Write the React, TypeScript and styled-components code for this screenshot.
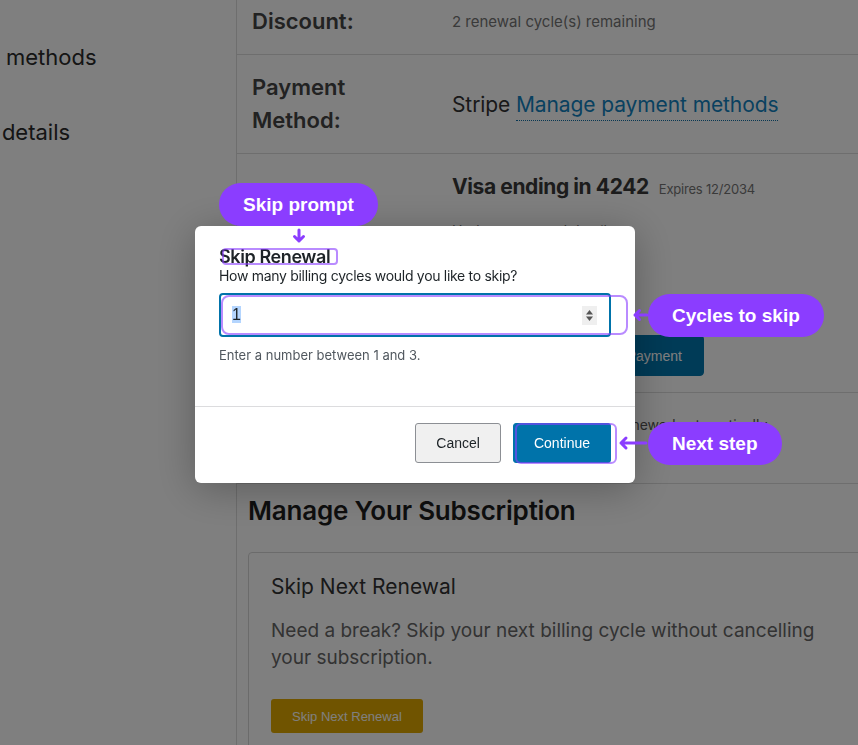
import React from "react";
import styled, { createGlobalStyle } from "styled-components";

const GlobalStyle = createGlobalStyle`
  * { box-sizing: border-box; }
  html, body { margin: 0; padding: 0; }
  body {
    width: 858px;
    height: 745px;
    overflow: hidden;
    background: #fff;
    font-family: Inter, "Noto Sans", Arial, sans-serif;
  }
`;

const Viewport = styled.div`
  position: relative;
  width: 858px;
  height: 745px;
  overflow: hidden;
`;

/* the page is scrolled: negative margins stand for the scroll offset */
const Page = styled.div`
  display: grid;
  grid-template-columns: 337px 880px;
  margin: -60px 0 0 -100px;
`;

const Sidebar = styled.nav`
  border-right: 1px solid #dcdcdc;
  padding: 5px 0 0 9px;
  min-height: 900px;
`;

const NavItem = styled.div`
  font-size: 22px;
  line-height: 33px;
  padding: 21px 0;
  color: #2a2a2a;
  white-space: nowrap;
`;

const Main = styled.main`
  padding-top: 16px;
`;

const Row = styled.div<{ $align?: string }>`
  display: grid;
  grid-template-columns: 200px 1fr;
  align-items: ${(p) => p.$align ?? "start"};
  padding: 16px 15px;
  border-bottom: 1px solid #dcdcdc;
`;

const Label = styled.div`
  padding-right: 40px;
  font-size: 22px;
  line-height: 33px;
  font-weight: 600;
  color: #444;
`;

const Value = styled.div`
  font-size: 21px;
  line-height: 33px;
  color: #333;
  letter-spacing: -0.1px;
`;

const Strong = styled.span`
  font-size: 21px;
  font-weight: 700;
  letter-spacing: -0.4px;
  color: #383838;
`;

const Muted = styled.div<{ $mt?: number; $lh?: number; $size?: number }>`
  margin-top: ${(p) => p.$mt ?? 0}px;
  font-size: ${(p) => p.$size ?? 14}px;
  line-height: ${(p) => p.$lh ?? 18}px;
  color: #757575;
  letter-spacing: 0;
`;

const InlineMuted = styled.span`
  margin-left: 10px;
  font-size: 13px;
  letter-spacing: -0.2px;
  color: #757575;
`;

const BodyText = styled.div<{ $lh: number }>`
  font-size: 14px;
  line-height: ${(p) => p.$lh}px;
  color: #555;
  white-space: nowrap;
`;

const Link = styled.a`
  color: #1282c0;
  text-decoration: none;
  border-bottom: 1px dotted #0f6fa4;
  padding-bottom: 3px;
`;

const CardField = styled.div`
  margin-top: 18px;
  height: 44px;
  width: 160px;
  border: 1px solid #dcdcdc;
  border-radius: 4px;
`;

const ButtonRow = styled.div`
  display: flex;
  gap: 12px;
  margin-top: 32px;
`;

const PageButton = styled.button<{ $primary?: boolean }>`
  height: 41px;
  padding: 0 ${(p) => (p.$primary ? 21 : 23)}px;
  border-radius: 4px;
  border: 1px solid ${(p) => (p.$primary ? "#0076ae" : "#ccc")};
  background: ${(p) => (p.$primary ? "#0076ae" : "#f5f5f5")};
  color: ${(p) => (p.$primary ? "#fff" : "#333")};
  font-family: "Liberation Sans", Arial, sans-serif;
  font-size: 14px;
`;

const SectionTitle = styled.h2`
  margin: 10px 0 0 11px;
  font-size: 26px;
  line-height: 34px;
  font-weight: 600;
  letter-spacing: -0.2px;
  color: #1d1d1d;
`;

const Card = styled.section`
  margin: 24px 0 0 11px;
  border: 1px solid #d6d6d6;
  border-radius: 4px;
  padding: 20px 22px 24px;
  min-height: 260px;
`;

const CardTitle = styled.h3`
  margin: 0;
  font-size: 21px;
  line-height: 28px;
  font-weight: 400;
  color: #333;
`;

const CardText = styled.p`
  margin: 16px 0 0;
  max-width: 548px;
  font-size: 19px;
  line-height: 27px;
  color: #666;
`;

const WarnButton = styled.button`
  margin-top: 28px;
  height: 34px;
  padding: 0 21px;
  border: none;
  border-radius: 3px;
  background: #e0a800;
  color: #fff;
  font-family: "Liberation Sans", Arial, sans-serif;
  font-size: 13px;
`;

/* ---------- modal ---------- */

const Overlay = styled.div`
  position: fixed;
  inset: 0;
  background: rgba(0, 0, 0, 0.5);
  display: flex;
  align-items: flex-start;
  padding: 226px 0 0 195px;
`;

const Modal = styled.div`
  width: 440px;
  background: #fff;
  border-radius: 6px;
  box-shadow: 0 6px 40px rgba(0, 0, 0, 0.28);
`;

const ModalBody = styled.div`
  padding: 21px 24px 42px;
`;

const ModalTitle = styled.h2`
  margin: 0;
  font-size: 18px;
  line-height: 20px;
  font-weight: 600;
  letter-spacing: -0.4px;
  color: #1d2327;
`;

const ModalText = styled.p`
  margin: 0;
  font-size: 14px;
  line-height: 18px;
  letter-spacing: -0.3px;
  color: #1d2327;
`;

const NumberField = styled.div`
  margin-top: 8px;
  height: 44px;
  display: flex;
  align-items: center;
  padding: 0 12px 0 11px;
  border: 2px solid #0073aa;
  border-radius: 4px;
`;

const FieldValue = styled.span`
  flex: 1;
  font-family: "Liberation Sans", Arial, sans-serif;
  font-size: 16px;
  line-height: 20px;
  color: #1d2327;
`;

const Selected = styled.span`
  background: #b4d5fe;
`;

const Spinner = styled.span`
  width: 15px;
  height: 19px;
  background: #efefef;
  display: flex;
  align-items: center;
  justify-content: center;
`;

const Help = styled.p`
  margin: 9px 0 0;
  font-size: 13px;
  line-height: 18px;
  color: #50575e;
`;

const ModalFooter = styled.div`
  border-top: 1px solid #dcdcde;
  padding: 16px 24px 20px;
  display: flex;
  justify-content: flex-end;
  gap: 12px;
`;

const DialogButton = styled.button<{ $primary?: boolean }>`
  height: 40px;
  padding: 0 20px;
  border-radius: 3px;
  border: 1px solid ${(p) => (p.$primary ? "#0073aa" : "#8c8f94")};
  background: ${(p) => (p.$primary ? "#0073aa" : "#f0f0f0")};
  color: ${(p) => (p.$primary ? "#fff" : "#1d2327")};
  font-family: "Liberation Sans", Arial, sans-serif;
  font-size: 14px;
`;

/* ---------- annotation layer ---------- */

const Pill = styled.div<{ $x: number; $y: number }>`
  position: absolute;
  left: ${(p) => p.$x}px;
  top: ${(p) => p.$y}px;
  height: 43px;
  padding: 0 24px;
  display: flex;
  align-items: center;
  border-radius: 22px;
  background: #8b3dff;
  color: #fff;
  font-family: "Liberation Sans", Arial, sans-serif;
  font-weight: 700;
  font-size: 19px;
  white-space: nowrap;
`;

const Focus = styled.div<{ $x: number; $y: number; $w: number; $h: number; $r: number }>`
  position: absolute;
  left: ${(p) => p.$x}px;
  top: ${(p) => p.$y}px;
  width: ${(p) => p.$w}px;
  height: ${(p) => p.$h}px;
  border: 2px solid rgba(139, 61, 255, 0.6);
  border-radius: ${(p) => p.$r}px;
`;

const Arrow = styled.svg<{ $x: number; $y: number }>`
  position: absolute;
  left: ${(p) => p.$x}px;
  top: ${(p) => p.$y}px;
  overflow: visible;
`;

const arrowStroke = {
  fill: "none",
  stroke: "#8b3dff",
  strokeWidth: 3,
  strokeLinecap: "round" as const,
  strokeLinejoin: "round" as const,
};

export default function App() {
  return (
    <Viewport>
      <GlobalStyle />
      <Page>
        <Sidebar>
          <NavItem>Subscriptions</NavItem>
          <NavItem>Payment methods</NavItem>
          <NavItem>Account details</NavItem>
        </Sidebar>
        <Main>
          <div>
            <Row>
              <Label>Renewal Discount:</Label>
              <Value>
                20% off
                <Muted $mt={8} $size={15}>
                  2 renewal cycle(s) remaining
                </Muted>
              </Value>
            </Row>
            <Row $align="center">
              <Label>Payment Method:</Label>
              <Value>
                Stripe <Link href="#">Manage payment methods</Link>
              </Value>
            </Row>
            <Row $align="center">
              <Label>Card:</Label>
              <Value>
                <Strong>Visa ending in 4242</Strong>
                <InlineMuted>Expires 12/2034</InlineMuted>
                <Muted $mt={15} $lh={20}>
                  Update your card details
                </Muted>
                <CardField />
                <ButtonRow>
                  <PageButton>Cancel</PageButton>
                  <PageButton $primary>Update Payment</PageButton>
                </ButtonRow>
              </Value>
            </Row>
            <Row $align="center">
              <Label>Auto:</Label>
              <div>
                <BodyText $lh={32}>Your subscription will be renewed automatically.</BodyText>
                <BodyText $lh={26}>Next: 12/2034</BodyText>
              </div>
            </Row>
          </div>
          <SectionTitle>Manage Your Subscription</SectionTitle>
          <Card>
            <CardTitle>Skip Next Renewal</CardTitle>
            <CardText>
              Need a break? Skip your next billing cycle without cancelling your subscription.
            </CardText>
            <WarnButton>Skip Next Renewal</WarnButton>
          </Card>
        </Main>
      </Page>

      <Overlay>
        <Modal role="dialog" aria-labelledby="skip-title">
          <ModalBody>
            <ModalTitle id="skip-title">Skip Renewal</ModalTitle>
            <ModalText>How many billing cycles would you like to skip?</ModalText>
            <NumberField role="spinbutton" aria-valuenow={1} aria-valuemin={1} aria-valuemax={3}>
              <FieldValue>
                <Selected>1</Selected>
              </FieldValue>
              <Spinner>
                <svg width="9" height="15" viewBox="0 0 9 15">
                  <path d="M4.5 2 L8 6.5 H1 Z" fill="#555" />
                  <path d="M1 8.5 H8 L4.5 13 Z" fill="#555" />
                </svg>
              </Spinner>
            </NumberField>
            <Help>Enter a number between 1 and 3.</Help>
          </ModalBody>
          <ModalFooter>
            <DialogButton>Cancel</DialogButton>
            <DialogButton $primary>Continue</DialogButton>
          </ModalFooter>
        </Modal>

        <Pill $x={219} $y={183}>Skip prompt</Pill>
        <Arrow $x={291} $y={228} width="16" height="16" viewBox="0 0 16 16">
          <path d="M8 2 V13 M3.5 8.5 L8 13 L12.5 8.5" {...arrowStroke} />
        </Arrow>
        <Focus $x={222} $y={248} $w={116} $h={17} $r={4} />

        <Focus $x={221} $y={295} $w={407} $h={40} $r={8} />
        <Arrow $x={632} $y={307} width="16" height="16" viewBox="0 0 16 16">
          <path d="M15 8 H3 M7.5 3.5 L3 8 L7.5 12.5" {...arrowStroke} />
        </Arrow>
        <Pill $x={648} $y={294}>Cycles to skip</Pill>

        <Focus $x={515} $y={423} $w={102} $h={41} $r={6} />
        <Arrow $x={618} $y={435} width="28" height="16" viewBox="0 0 28 16">
          <path d="M28 8 H3 M8 3 L3 8 L8 13" {...arrowStroke} />
        </Arrow>
        <Pill $x={648} $y={422}>Next step</Pill>
      </Overlay>
    </Viewport>
  );
}
